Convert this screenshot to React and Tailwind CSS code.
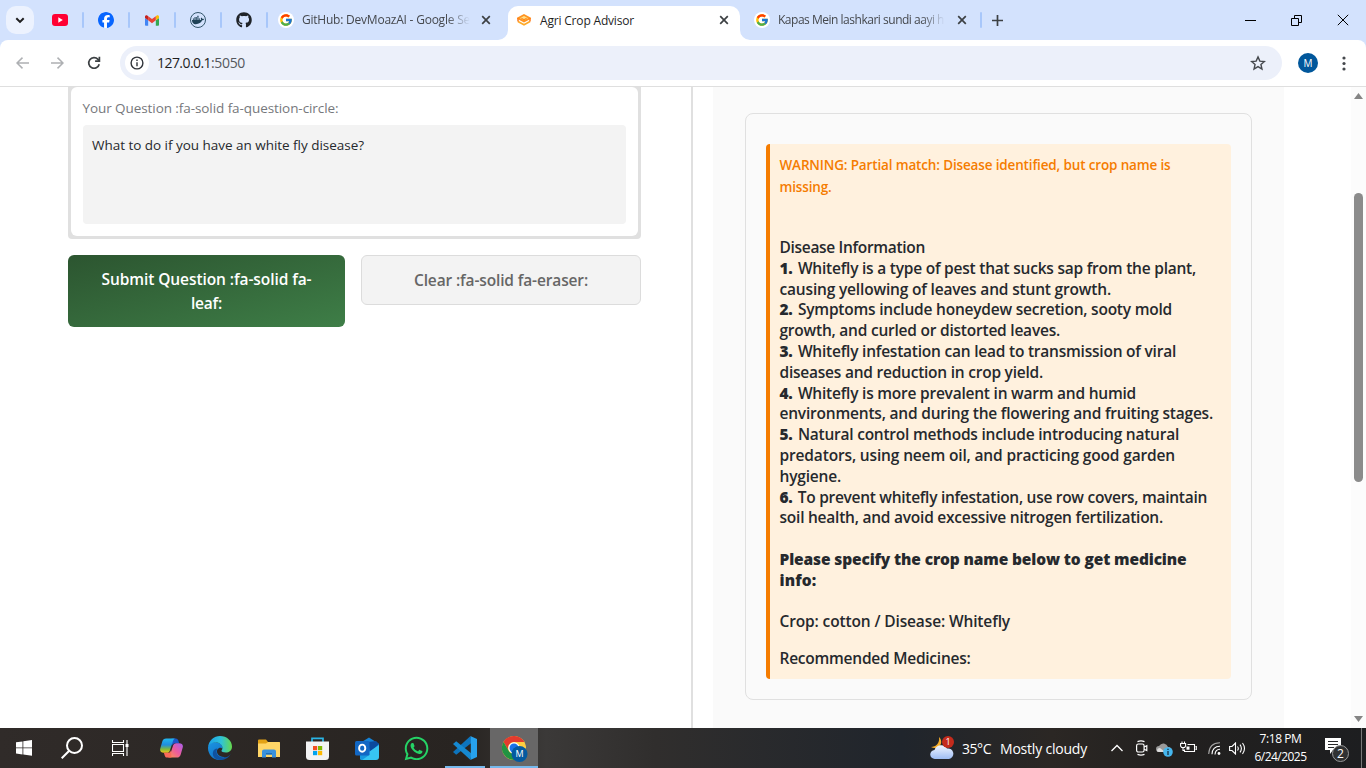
import { useLayoutEffect, useRef, useState } from "react";
import { FaFacebook, FaGithub, FaDocker, FaWhatsapp } from "react-icons/fa6";
import { FcGoogle } from "react-icons/fc";

/* A single line of text whose tracking is adjusted so it fills `w` pixels. */
function Line({ w, className = "", children }) {
  const ref = useRef(null);
  const [spacing, setSpacing] = useState(0);
  useLayoutEffect(() => {
    const el = ref.current;
    const n = el.textContent.length;
    setSpacing((w - el.getBoundingClientRect().width) / n);
  }, [w]);
  return (
    <span className={`block ${className}`}>
      <span ref={ref} className="inline-block whitespace-pre" style={{ letterSpacing: `${spacing}px` }}>
        {children}
      </span>
    </span>
  );
}

const Sep = () => <div className="h-4 w-[2px] shrink-0 rounded-full bg-[#a8c7fa]" />;

const Close = () => (
  <svg className="size-[10px] shrink-0" viewBox="0 0 10 10" stroke="#3c4043" strokeWidth="1.7">
    <path d="M1.2 1.2 8.8 8.8M8.8 1.2 1.2 8.8" />
  </svg>
);

const Gmail = () => (
  <svg className="h-[11px] w-[14px]" viewBox="52 42 88 66">
    <path fill="#4285f4" d="M58 108h14V74L52 59v43c0 3.3 2.7 6 6 6" />
    <path fill="#34a853" d="M120 108h14c3.300 0 6-2.700 6-6V59l-20 15" />
    <path fill="#fbbc04" d="M120 48v26l20-15v-8c0-7.400-8.500-11.700-14.400-7.200" />
    <path fill="#ea4335" d="M72 74V48l24 18 24-18v26L96 92" />
    <path fill="#c5221f" d="M52 51v8l20 15V48l-5.600-4.200C60.500 39.300 52 43.600 52 51" />
  </svg>
);

const GoogleIcon = () => (
  <span className="grid size-4 shrink-0 place-items-center rounded-full bg-white">
    <FcGoogle className="size-[14px]" />
  </span>
);

function TabStrip() {
  return (
    <div className="flex h-10 items-center bg-[#d3e2fd] text-[12px] text-[#45484d]">
      <div className="ml-1.5 grid size-7 place-items-center rounded-[10px] bg-[#ecf2fe]">
        <svg width="10" height="7" viewBox="0 0 10 7" fill="none" stroke="#1f1f1f" strokeWidth="2">
          <path d="M1.300 1.200 5 4.900 8.700 1.200" />
        </svg>
      </div>
      <svg className="ml-[18px] h-3 w-4" viewBox="0 0 16 12">
        <rect width="16" height="12" rx="3" fill="#ff0033" />
        <path fill="#fff" d="m6.300 3.300 4.500 2.700-4.500 2.700z" />
      </svg>
      <div className="ml-[14px] flex items-center gap-[14px]">
        <Sep />
        <span className="grid size-4 place-items-center rounded-full bg-white"><FaFacebook className="size-4 text-[#0866ff]" /></span>
        <Sep />
        <span className="grid size-4 place-items-center"><Gmail /></span>
        <Sep />
        <span className="grid size-4 place-items-center rounded-full border border-[#33566b]">
          <FaDocker className="size-[12px] text-[#1f4257]" />
        </span>
        <Sep />
        <FaGithub className="size-4 text-[#1f2328]" />
        <Sep />
      </div>
      <div className="ml-[10px] flex w-[230px] items-center">
        <GoogleIcon />
        <div className="ml-2 w-[168px] overflow-hidden [mask-image:linear-gradient(to_right,black_86%,transparent)]">
          <Line w={168}>GitHub: DevMoazAI - Google Se</Line>
        </div>
        <span className="ml-[11px] flex"><Close /></span>
      </div>
      <div className="relative flex h-[34px] w-[232px] items-center self-end rounded-t-[10px] bg-white text-[#1f1f1f]">
        <svg className="absolute bottom-0 -left-[10px] size-[10px]" viewBox="0 0 10 10" fill="#fff"><path d="M10 0v10H0A10 10 0 0 0 10 0" /></svg>
        <svg className="absolute -right-[10px] bottom-0 size-[10px]" viewBox="0 0 10 10" fill="#fff"><path d="M0 0v10h10A10 10 0 0 1 0 0" /></svg>
        <svg className="mb-[6px] ml-[9px] h-3 w-[14px]" viewBox="0 0 14 12" fill="none">
          <path d="M7 1 13 4.200 7 7.400 1 4.200z" stroke="#ff9320" strokeWidth="1.800" fill="#ffe08a" />
          <path d="M1 7.600 7 10.800l6-3.200" stroke="#ffaa27" strokeWidth="1.700" />
          <path d="M1 4.200v3.400M13 4.200v3.400" stroke="#ff7a1a" strokeWidth="1.500" />
          <path d="M4.400 4.300 7 5.700l2.600-1.400" stroke="#ff8a1a" strokeWidth="1.200" />
        </svg>
        <span className="mb-[5px] ml-[9px]"><Line w={94}>Agri Crop Advisor</Line></span>
        <span className="mb-[6px] ml-auto flex pr-[11px]"><Close /></span>
      </div>
      <div className="ml-[14px] flex items-center">
        <GoogleIcon />
        <div className="ml-2 w-[167px] overflow-hidden [mask-image:linear-gradient(to_right,black_86%,transparent)]">
          <Line w={166}>Kapas Mein lashkari sundi aayi h</Line>
        </div>
        <span className="ml-[12px] flex"><Close /></span>
      </div>
      <div className="ml-[13px]"><Sep /></div>
      <svg className="ml-[10px] size-[11px]" viewBox="0 0 11 11" stroke="#3c4043" strokeWidth="1.700"><path d="M5.500 0v11M0 5.500h11" /></svg>
      <div className="ml-auto flex items-center gap-[35px] pr-[17px]">
        <svg width="11" height="11" viewBox="0 0 11 11" stroke="#000"><path d="M0 5.500h11" /></svg>
        <svg width="11" height="11" viewBox="0 0 11 11" fill="none" stroke="#000"><path d="M.5 3.500h7v7h-7zM3.500 3V.5h7v7H8" /></svg>
        <svg width="12" height="12" viewBox="0 0 12 12" stroke="#000"><path d="m.8.8 10.400 10.400M11.200.8.8 11.200" /></svg>
      </div>
    </div>
  );
}

function Toolbar() {
  return (
    <div className="bg-[#d3e2fd]">
      <div className="flex h-[47px] items-center rounded-t-lg border-b border-[#dfdfdf] bg-white">
        <svg className="ml-4 h-3 w-[13px]" viewBox="0 0 13 12" fill="none" stroke="#aeb0b3" strokeWidth="1.500"><path d="M13 6H1M6.500.6 1 6l5.500 5.400" /></svg>
        <svg className="ml-[22px] h-3 w-[13px]" viewBox="0 0 13 12" fill="none" stroke="#aeb0b3" strokeWidth="1.500"><path d="M0 6h12M6.500.6 12 6l-5.500 5.400" /></svg>
        <svg className="ml-[23px] size-[14px]" viewBox="0 0 14 14" fill="none" stroke="#3c4043" strokeWidth="1.700">
          <path d="M12.200 8.200A5.300 5.300 0 1 1 11 3.400l1.300 1.400" /><path d="M12.400.8v4.300H8.100" />
        </svg>
        <div className="ml-[19px] flex h-[34px] w-[1162px] items-center rounded-full bg-[#ecf0fa]">
          <span className="ml-[5px] grid size-6 place-items-center rounded-full bg-white">
            <svg width="14" height="14" viewBox="0 0 14 14" fill="none" stroke="#30343a" strokeWidth="1.400"><circle cx="7" cy="7" r="5.900" /><path d="M7 6.300v4M7 3.600v1.500" /></svg>
          </span>
          <span className="mb-px ml-2 flex text-[14px] text-[#1f1f1f]"><Line w={54}>127.0.0.1</Line><Line w={34} className="text-[#55585d]">:5050</Line></span>
          <svg className="mr-4 ml-auto size-4" viewBox="0 0 16 16" fill="none" stroke="#45484d" strokeWidth="1.400"><path d="m8 1.900 1.850 4.200 4.500.4-3.400 3 1 4.500L8 11.600 4.050 14l1-4.500-3.400-3 4.500-.4z" /></svg>
        </div>
        <span className="ml-4 grid size-5 place-items-center rounded-full bg-[#01579b] text-[10px] text-white">M</span>
        <svg className="ml-6 h-[15px] w-1" viewBox="0 0 4 15" fill="#45484d"><circle cx="2" cy="2" r="1.600" /><circle cx="2" cy="7.500" r="1.600" /><circle cx="2" cy="13" r="1.600" /></svg>
      </div>
    </div>
  );
}

const info = [
  [145.5, "Disease Information"],
  [416.5, "Whitefly is a type of pest that sucks sap from the plant,", "1."],
  [331.5, "causing yellowing of leaves and stunt growth."],
  [392.5, "Symptoms include honeydew secretion, sooty mold", "2."],
  [280.5, "growth, and curled or distorted leaves."],
  [396.5, "Whitefly infestation can lead to transmission of viral", "3."],
  [263.5, "diseases and reduction in crop yield."],
  [356.5, "Whitefly is more prevalent in warm and humid", "4."],
  [433.5, "environments, and during the flowering and fruiting stages."],
  [399.5, "Natural control methods include introducing natural", "5."],
  [395.5, "predators, using neem oil, and practicing good garden"],
  [61.5, "hygiene."],
  [427.5, "To prevent whitefly infestation, use row covers, maintain", "6."],
  [383.5, "soil health, and avoid excessive nitrogen fertilization."],
];

function Content() {
  return (
    <main className="flex h-[641px] overflow-hidden bg-white">
      <section className="ml-[68px] w-[573px] shrink-0">
        <div className="-mt-[3px] h-[155px] rounded-[4px] bg-[#e0e0e0] p-[3px]">
          <div className="h-[149px] rounded-md bg-white px-3 pt-[10px]">
            <div className="-ml-[0.500px] text-[13.500px] leading-[22px] text-[#76787c]"><Line w={256}>Your Question :fa-solid fa-question-circle:</Line></div>
            <div className="mt-[6px] h-[99px] w-[543px] rounded-[4px] bg-[#f3f3f3] px-[9px] pt-[9px] text-[13.500px] leading-[22px] text-[#26292d]">
              <Line w={272}>What to do if you have an white fly disease?</Line>
            </div>
          </div>
        </div>
        <div className="mt-4 flex items-start gap-4 font-semibold">
          <div className="h-[72px] w-[277px] rounded-md bg-gradient-to-br from-[#2c5530] to-[#3e7e47] pt-3 text-center text-[15.500px] leading-6 text-white">
            <Line w={210}>Submit Question :fa-solid fa-</Line>
            <Line w={31}>leaf:</Line>
          </div>
          <div className="h-[50px] w-[280px] rounded-md border border-[#dcdcdc] bg-[#f3f3f3] pt-3 text-center text-[15.500px] leading-6 text-[#666]">
            <Line w={174}>Clear :fa-solid fa-eraser:</Line>
          </div>
        </div>
      </section>
      <div className="ml-[50px] w-[2px] shrink-0 bg-[#e0e0e0]" />
      <section className="ml-5 w-[571px] shrink-0 bg-[#fafafa] px-8 pt-[26px]">
        <div className="h-[587px] w-[507px] rounded-lg border border-[#e0e0e0] px-5 pt-[30px]">
          <div className="h-[535px] rounded-[4px] border-l-4 border-[#f57c00] bg-[#fff1de] pt-[10px] pl-[9.500px] font-semibold">
            <div className="text-[13.500px] leading-[22px] text-[#f57c00]">
              <Line w={391}>WARNING: Partial match: Disease identified, but crop name is</Line>
              <Line w={52}>missing.</Line>
            </div>
            <div className="mt-[39px] text-[15.500px] leading-[20.800px] font-[550] text-[#26292d]">
              {info.map(([w, text, num]) => (
                <Line key={text} w={w}>{num && <b className="mr-[1.500px] font-extrabold">{num} </b>}{text}</Line>
              ))}
              <div className="mt-[20.800px] font-extrabold">
                <Line w={407}>Please specify the crop name below to get medicine</Line>
                <Line w={37}>info:</Line>
              </div>
              <div className="mt-[20.800px]"><Line w={230.5}>Crop: cotton / Disease: Whitefly</Line></div>
              <div className="mt-4"><Line w={191}>Recommended Medicines:</Line></div>
            </div>
          </div>
        </div>
      </section>
      <div className="ml-auto flex w-[15px] flex-col items-center bg-[#fcfcfc] pt-[6px] pb-[6px]">
        <svg width="9" height="6" viewBox="0 0 9 6" fill="#858585"><path d="M4.500 0 9 6H0z" /></svg>
        <div className="mt-[94px] h-[289px] w-[9px] rounded-full bg-[#8b8b8b]" />
        <svg className="mt-auto" width="9" height="6" viewBox="0 0 9 6" fill="#858585"><path d="M0 0h9L4.500 6z" /></svg>
      </div>
    </main>
  );
}

const Copilot = () => (
  <svg width="23" height="22" viewBox="0 0 24 22">
    <defs>
      <linearGradient id="cpa" x1="0" y1="0" x2="0" y2="1"><stop stopColor="#22b8f0" /><stop offset=".45" stopColor="#1f8de0" /><stop offset=".75" stopColor="#7fba3c" /><stop offset="1" stopColor="#f5c51c" /></linearGradient>
      <linearGradient id="cpb" x1="1" y1="0" x2="0" y2="1"><stop stopColor="#a660f0" /><stop offset=".5" stopColor="#ee5b9c" /><stop offset="1" stopColor="#ff9a4a" /></linearGradient>
    </defs>
    <path fill="#1c55c9" d="M12 1h4.500c1.300 0 2.100.8 2.500 2l1 3h-4c-2 0-3 1-3.500 3z" />
    <path fill="url(#cpa)" d="M6.500 1H16c-1.500.3-2 1.500-2.500 3l-3 9c-.6 2-1.600 3-3.500 3H4c-2.800 0-4.500-1.500-3.700-4.500l2-7C3 2 4.200 1 6.500 1" />
    <path fill="url(#cpb)" d="M17.500 21H8c1.500-.3 2-1.500 2.500-3l3-9c.6-2 1.600-3 3.500-3h3c2.800 0 4.500 1.500 3.700 4.500l-2 7c-.7 2.500-1.900 3.500-4.200 3.500" />
    <path fill="#fb6a5a" d="M12 21H7.500c-1.300 0-2.100-.8-2.500-2l-1-3h4c2 0 3-1 3.500-3z" />
  </svg>
);

const Edge = () => (
  <svg width="24" height="24" viewBox="0 0 24 24">
    <defs>
      <linearGradient id="eg1" x1="0" y1=".4" x2="1" y2=".4"><stop stopColor="#1ba0e8" /><stop offset=".55" stopColor="#2fc3d8" /><stop offset="1" stopColor="#66d94c" /></linearGradient>
      <linearGradient id="eg2" x1="0" y1="0" x2=".6" y2="1"><stop stopColor="#1c94e0" /><stop offset="1" stopColor="#1173c9" /></linearGradient>
    </defs>
    <path fill="url(#eg2)" d="M0 12C0 7 5 5.500 9 6.500c4.500 1 6 4 5.500 6.500-.8-1.600-3.500-2-5 .3-2 3.500 1.500 8 7 7.700-1 1.800-3 3-5 3C5 24 0 18.500 0 12" />
    <path fill="#10529f" d="M9.500 12.500c-3 5 1.500 9.800 7.500 8.800 2.600-.5 4.400-1.700 5.700-3.400C20.600 22 16.500 24 12 24c-5 0-8-4-7-8 .5-2 2-3.500 4.500-3.500" />
    <path fill="url(#eg1)" d="M.1 11C.8 4.500 6 0 12 0c7 0 12 5 12 10.500 0 4-3 6-6.200 6-2.700 0-4.300-.8-4.300-1.700 0-.7 1-1 1-2.800C14.500 8.500 11 6.500 7.500 6.500 4 6.500 1 8.500.1 11" />
  </svg>
);

const Explorer = () => (
  <svg width="22" height="19" viewBox="0 0 22 19">
    <path fill="#e2a216" d="M0 1.500Q0 .5 1 .5h7l2 2.500h11q1 0 1 1V9H0z" />
    <path fill="#ffd667" d="M0 4.500h8L10 3h11q1 0 1 1v14H0z" />
    <path fill="#3a92dc" d="M4 18.500v-6q0-2 2-2h10q2 0 2 2v6h-4v-3H8v3z" /><path fill="#1d6fb8" d="M8 14h6v1.500H8z" />
  </svg>
);

const Store = () => (
  <svg width="23" height="23" viewBox="0 0 23 23">
    <path fill="none" stroke="#2ab5e6" strokeWidth="1.700" d="M6 5.500V1.300h11v4.200" />
    <path fill="#f3f3f3" d="M0 4.500h23v15q0 3.500-3.500 3.500h-16Q0 23 0 19.500z" />
    <path fill="#f25022" d="M7 9h4.200v4.200H7z" /><path fill="#7fba00" d="M12 9h4.200v4.200H12z" /><path fill="#00a4ef" d="M7 14h4.200v4.200H7z" /><path fill="#ffb900" d="M12 14h4.200v4.200H12z" />
  </svg>
);

const Outlook = () => (
  <svg width="24" height="23" viewBox="0 0 24 23">
    <path fill="#1583d8" d="M5 6 14 .5 24 7v9H5z" /><path fill="#0b4a9d" d="m13 5 8-1 3 3-9 8z" />
    <path fill="#37c5f2" d="M24 8v12q0 3-3 3H7q-2 0-2-2z" /><path fill="#1698e0" d="m5 14 10 3.500L7 23q-2 0-2-2z" />
    <rect y="4" width="14.500" height="14.500" rx="1.500" fill="#1267c4" /><ellipse cx="7.200" cy="11.200" rx="3.100" ry="3.600" fill="none" stroke="#fff" strokeWidth="1.900" />
  </svg>
);

const VsCode = () => (
  <svg width="24" height="24" viewBox="0 0 24 24">
    <path fill="#0d74bd" d="M17.500 0 19 6.500 3.200 18.700 0 16z" />
    <path fill="#1689d1" d="m17.500 24 1-6.500L3.200 5.300 0 8z" />
    <path fill="#27a2ee" d="M17.300 0 24 3v18l-6.700 3q.5-.4.500-1.300V1.300q0-.9-.5-1.300" />
  </svg>
);

const Chrome = () => (
  <svg width="26" height="26" viewBox="0 0 26 26">
    <circle cx="12" cy="12" r="12" fill="#ffcd40" />
    <path fill="#e33b2e" d="M1.600 6A12 12 0 0 1 22.400 6H12a6 6 0 0 0-5.200 9z" /><path fill="#229342" d="M1.600 6A12 12 0 0 0 12 24l5.200-9A6 6 0 0 1 6.800 15z" />
    <circle cx="12" cy="12" r="5.700" fill="#fff" /><circle cx="12" cy="12" r="4.500" fill="#1a73e8" />
    <circle cx="17.500" cy="18" r="8" fill="#045aa0" />
    <text x="17.500" y="21.300" textAnchor="middle" fontSize="9" fill="#fff">M</text>
  </svg>
);

function Taskbar() {
  return (
    <footer className="flex h-10 items-center bg-[linear-gradient(90deg,#302b29_0%,#282421_34%,#3b3938_40%,#302e2d_48%,#20252c_66%,#2b2724_77%,#22201f_86%,#1d1e20_100%)] text-white">
      <div className="grid w-12 place-items-center">
        <svg width="16" height="16" viewBox="0 0 16 16" fill="#fff"><path d="M0 2.300 6.500 1.400v6.100H0zM7.300 1.300 16 0v7.500H7.300zM0 8.300h6.500v6.100L0 13.500zM7.300 8.300H16v7.500l-8.700-1.200z" /></svg>
      </div>
      <div className="grid w-12 place-items-center">
        <svg width="23" height="23" viewBox="0 0 23 23" fill="none" stroke="#fff" strokeWidth="2"><circle cx="13.500" cy="8.500" r="7.500" /><path d="M8.200 13.800.7 21.300" /></svg>
      </div>
      <div className="grid w-12 place-items-center">
        <svg width="17" height="16" viewBox="0 0 17 16" fill="none" stroke="#fff" strokeWidth="1.100"><path d="M.5 0v2.500h11V0M.5 16v-2.500h11V16M.5 4.500h11v7H.5zM15 0v16" /><path d="M13.500 4h3v3h-3z" fill="#fff" stroke="none" /></svg>
      </div>
      <div className="ml-[3px] flex h-10 gap-px">
        <div className="grid w-12 place-items-center"><Copilot /></div>
        <div className="grid w-12 place-items-center"><Edge /></div>
        <div className="grid w-12 place-items-center"><Explorer /></div>
        <div className="grid w-12 place-items-center pr-px"><Store /></div>
        <div className="grid w-12 place-items-center"><Outlook /></div>
        <div className="grid w-12 place-items-center"><FaWhatsapp className="size-[27px] text-[#25d366]" /></div>
        <div className="flex w-12 flex-col items-center justify-between pt-2"><VsCode /><div className="h-[2px] w-10 bg-[#76b9ed]" /></div>
        <div className="flex w-12 flex-col items-center justify-between bg-[#686767] pt-2"><span className="pl-[2px]"><Chrome /></span><div className="h-[2px] w-full bg-[#76b9ed]" /></div>
      </div>
      <svg className="ml-[392px] shrink-0" width="24" height="24" viewBox="0 0 24 24">
        <defs><linearGradient id="cl" x1="0" y1="0" x2="0" y2="1"><stop stopColor="#f2f6ff" /><stop offset="1" stopColor="#9dbcf3" /></linearGradient></defs>
        <path fill="#f6ad2b" d="M9 1c3.500 3.500 2.800 8.500-1.500 10.500C5 12.600 3 12 1 11c5 0 9-4 8-10" />
        <path fill="url(#cl)" d="M5 23a4.500 4.500 0 0 1-.5-9A7 7 0 0 1 17 12.500 5.300 5.300 0 0 1 19 23z" />
        <circle cx="18" cy="6" r="6" fill="#c42b1c" /><text x="18" y="9.200" fill="#fff" fontSize="9" textAnchor="middle">1</text>
      </svg>
      <div className="ml-2 flex text-[14px]"><Line w={29}>35°C</Line><div className="ml-[9px]"><Line w={87}>Mostly cloudy</Line></div></div>
      <svg className="ml-6 shrink-0" width="12" height="8" viewBox="0 0 12 8" fill="none" stroke="#fff" strokeWidth="1.300"><path d="m.5 7 5.500-5.500L11.500 7" /></svg>
      <svg className="ml-[13px] shrink-0" width="12" height="16" viewBox="0 0 12 16" fill="none" stroke="#fff" strokeWidth="1.200"><rect x=".6" y="4" width="7.500" height="8" rx="1.800" /><path d="m8.100 7 2.700-1.300v4.800L8.100 9.200M1.500 1.600Q5 .2 8.500 1.600M1.500 14.400q3.500 1.400 7 0" /></svg>
      <svg className="mt-[3px] ml-[8px] shrink-0" width="17" height="14" viewBox="0 0 17 14"><path fill="#999" d="M3 9a3 3 0 0 1 0-6Q5 0 8 .5T12 4q4 0 4 5z" /><path fill="#ddd" d="M1 8q0-3 3-3l5 4H3Q1 9 1 8" /><circle cx="12" cy="9" r="4.800" fill="#45b6ee" /><path stroke="#142e42" strokeWidth="1.300" d="M12 8v4M12 5.700V7" /></svg>
      <svg className="mb-[2px] ml-[7px] shrink-0" width="17" height="13" viewBox="0 0 17 13" fill="none" stroke="#fff" strokeWidth="1.100"><path d="M7.500 3.500h7v7h-10v-2M15.500 5.500h.8v3h-.8M.6 2.500h5v2.500L4.600 6.500h-3L.6 5zM2 .5v2M4.500.5v2M3 6.500v3h1.500" /><path fill="#fff" d="M6.500 5.500H9.500v3.200H6.500z" stroke="none" /></svg>
      <svg className="ml-[11px] shrink-0" width="13" height="13" viewBox="0 0 13 13" fill="none" stroke="#fff" strokeWidth="1.100"><path opacity=".6" d="M.7 12Q1 1 12 .7" /><path d="M4 12.300Q4.200 4.400 12 4.200M7 12.500q.3-5 5-5.200" /><circle cx="11" cy="11.500" r="1.400" fill="#fff" stroke="none" /></svg>
      <svg className="ml-[8px] shrink-0" width="17" height="13" viewBox="0 0 17 13" fill="none" stroke="#fff" strokeWidth="1.100"><path d="M.6 4.500H3L6.500 1v11L3 8.500H.6zM8.500 4.500q1.600 2 0 4M11 2.700q2.800 3.800 0 7.600M13.500 1q4 5.500 0 11" /></svg>
      <div className="ml-[8px] w-[53px] shrink-0 text-center text-[12px] leading-[18px]"><Line w={42}>7:18 PM</Line><Line w={52}>6/24/2025</Line></div>
      <svg className="mt-1 ml-[18px] shrink-0" width="24" height="24" viewBox="0 0 24 24"><path fill="#fff" d="M0 0h16v12H8l-3 4v-4H0z" /><path stroke="#28292a" strokeWidth="1" d="M3 3.500h10M3 6.500h10M3 9.500h6" /><circle cx="15.500" cy="15.500" r="8" fill="#303132" stroke="#999" /><text x="15.500" y="19.700" fill="#fff" fontSize="12" textAnchor="middle">2</text></svg>
      <div className="ml-auto h-10 w-[5px] shrink-0 border-l border-[#777]" />
    </footer>
  );
}

export default function App() {
  return (
    <div className="flex h-[768px] w-[1366px] flex-col overflow-hidden bg-white font-['Open_Sans','Noto_Sans',sans-serif]">
      <TabStrip />
      <Toolbar />
      <Content />
      <Taskbar />
    </div>
  );
}
